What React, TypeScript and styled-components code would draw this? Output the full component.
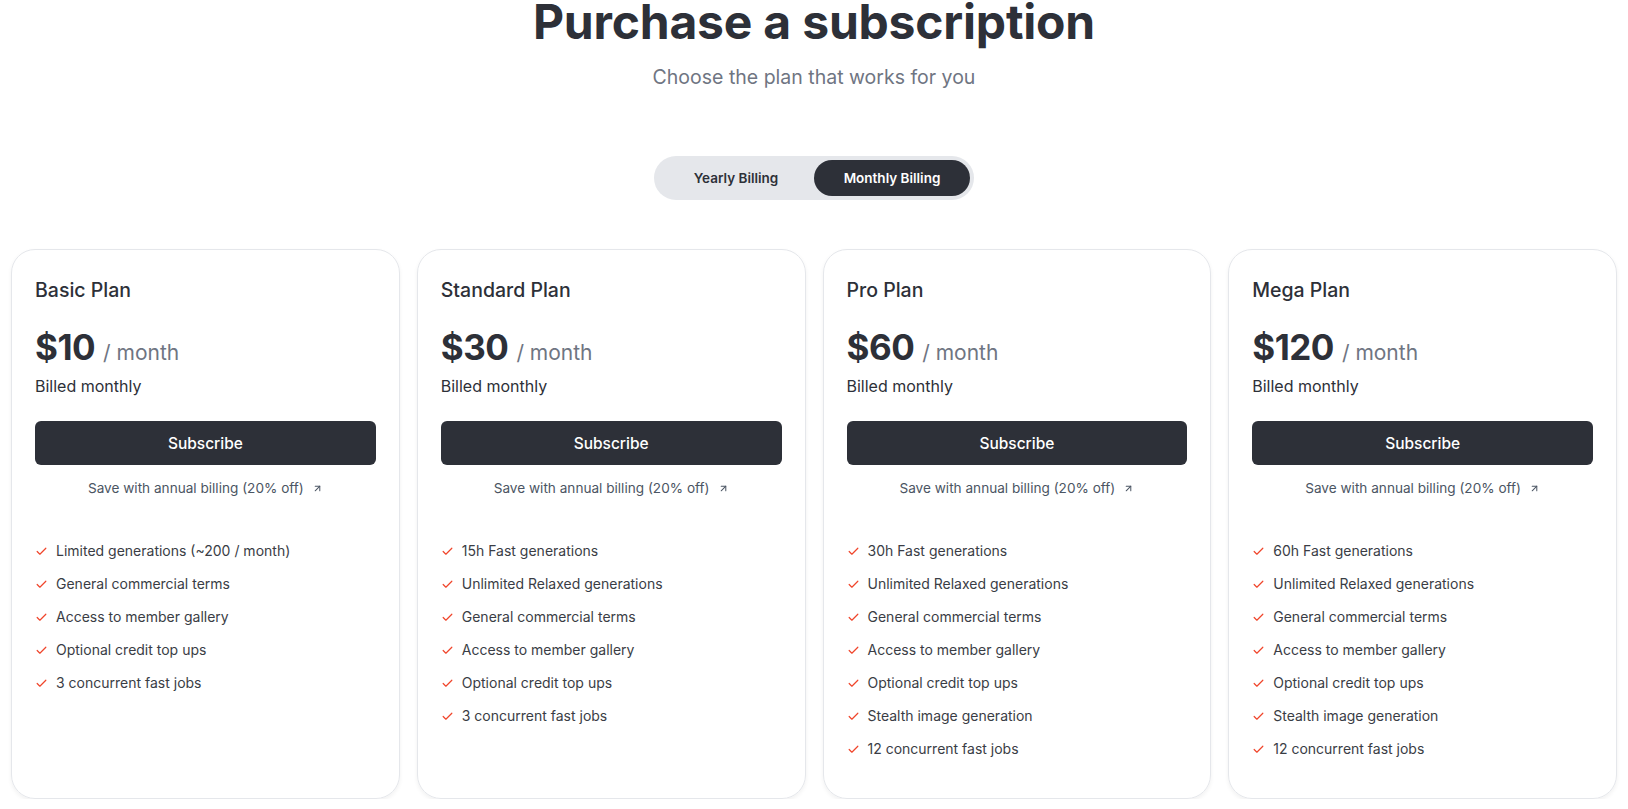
import styled, { createGlobalStyle } from "styled-components";
import { Check, ArrowUpRight } from "lucide-react";

const GlobalStyle = createGlobalStyle`
  * { box-sizing: border-box; }
  body {
    margin: 0;
    background: #ffffff;
    font-family: Inter, "Noto Sans", sans-serif;
    color: #2d3038;
  }
`;

type Plan = {
  name: string;
  price: string;
  features: string[];
};

const plans: Plan[] = [
  {
    name: "Basic Plan",
    price: "$10",
    features: [
      "Limited generations (~200 / month)",
      "General commercial terms",
      "Access to member gallery",
      "Optional credit top ups",
      "3 concurrent fast jobs",
    ],
  },
  {
    name: "Standard Plan",
    price: "$30",
    features: [
      "15h Fast generations",
      "Unlimited Relaxed generations",
      "General commercial terms",
      "Access to member gallery",
      "Optional credit top ups",
      "3 concurrent fast jobs",
    ],
  },
  {
    name: "Pro Plan",
    price: "$60",
    features: [
      "30h Fast generations",
      "Unlimited Relaxed generations",
      "General commercial terms",
      "Access to member gallery",
      "Optional credit top ups",
      "Stealth image generation",
      "12 concurrent fast jobs",
    ],
  },
  {
    name: "Mega Plan",
    price: "$120",
    features: [
      "60h Fast generations",
      "Unlimited Relaxed generations",
      "General commercial terms",
      "Access to member gallery",
      "Optional credit top ups",
      "Stealth image generation",
      "12 concurrent fast jobs",
    ],
  },
];

const Page = styled.div`
  display: flex;
  flex-direction: column;
  align-items: center;
`;

const Title = styled.h1`
  margin: 0;
  font-size: 48px;
  line-height: 44px;
  font-weight: 700;
  letter-spacing: -0.2px;
  color: #2d3038;
`;

const Subtitle = styled.p`
  margin: 20px 0 0;
  font-size: 19.5px;
  line-height: 26px;
  color: #6f7582;
`;

const Toggle = styled.div`
  margin-top: 66px;
  display: flex;
  padding: 4px;
  width: 320px;
  height: 44px;
  border-radius: 22px;
  background: #e5e7eb;
`;

const ToggleOption = styled.button<{ $active?: boolean }>`
  flex: 1;
  border: none;
  border-radius: 19px;
  font-family: inherit;
  font-size: 13.5px;
  font-weight: 600;
  cursor: pointer;
  background: ${(p) => (p.$active ? "#2d3038" : "transparent")};
  color: ${(p) => (p.$active ? "#ffffff" : "#2d3038")};
`;

const Cards = styled.div`
  margin-top: 49px;
  width: 100%;
  padding: 0 11px;
  display: grid;
  grid-template-columns: repeat(4, 1fr);
  gap: 17px;
`;

const Card = styled.div`
  height: 550px;
  border: 1px solid #e5e7eb;
  border-radius: 24px;
  box-shadow: 0 2px 4px rgba(0, 0, 0, 0.06);
  padding: 26px 23px 24px;
  display: flex;
  flex-direction: column;
`;

const PlanName = styled.div`
  font-size: 19.5px;
  line-height: 28px;
  font-weight: 500;
  color: #2d3038;
`;

const PriceRow = styled.div`
  margin-top: 22px;
  display: flex;
  align-items: baseline;
  gap: 8px;
`;

const Price = styled.span`
  font-size: 35px;
  line-height: 42px;
  font-weight: 700;
  letter-spacing: -0.5px;
  color: #2d3038;
`;

const Period = styled.span`
  font-size: 21px;
  color: #6f7582;
`;

const Billed = styled.div`
  margin-top: 7px;
  font-size: 16px;
  line-height: 22px;
  color: #2d3038;
`;

const SubscribeButton = styled.button`
  margin-top: 24px;
  height: 44px;
  width: 100%;
  border: none;
  border-radius: 6px;
  background: #2d3038;
  color: #ffffff;
  font-family: inherit;
  font-size: 15.5px;
  font-weight: 500;
  cursor: pointer;
`;

const SaveLink = styled.a`
  margin-top: 13px;
  display: flex;
  align-items: center;
  justify-content: center;
  gap: 8px;
  font-size: 13.6px;
  line-height: 20px;
  color: #4b5563;
  text-decoration: none;
`;

const Features = styled.ul`
  list-style: none;
  margin: 42px 0 0;
  padding: 0;
  display: flex;
  flex-direction: column;
  gap: 11px;
`;

const Feature = styled.li`
  display: flex;
  align-items: center;
  gap: 8px;
  font-size: 14px;
  line-height: 22px;
  color: #3a3d45;

  svg {
    flex-shrink: 0;
    color: #f0452b;
  }
`;

const PlanCard = ({ name, price, features }: Plan) => (
  <Card>
    <PlanName>{name}</PlanName>
    <PriceRow>
      <Price>{price}</Price>
      <Period>/ month</Period>
    </PriceRow>
    <Billed>Billed monthly</Billed>
    <SubscribeButton>Subscribe</SubscribeButton>
    <SaveLink href="#">
      Save with annual billing (20% off)
      <ArrowUpRight size={11} strokeWidth={2.2} />
    </SaveLink>
    <Features>
      {features.map((f) => (
        <Feature key={f}>
          <Check size={13} strokeWidth={2.2} />
          {f}
        </Feature>
      ))}
    </Features>
  </Card>
);

export default function App() {
  return (
    <Page>
      <GlobalStyle />
      <Title>Purchase a subscription</Title>
      <Subtitle>Choose the plan that works for you</Subtitle>
      <Toggle>
        <ToggleOption>Yearly Billing</ToggleOption>
        <ToggleOption $active>Monthly Billing</ToggleOption>
      </Toggle>
      <Cards>
        {plans.map((p) => (
          <PlanCard key={p.name} {...p} />
        ))}
      </Cards>
    </Page>
  );
}
